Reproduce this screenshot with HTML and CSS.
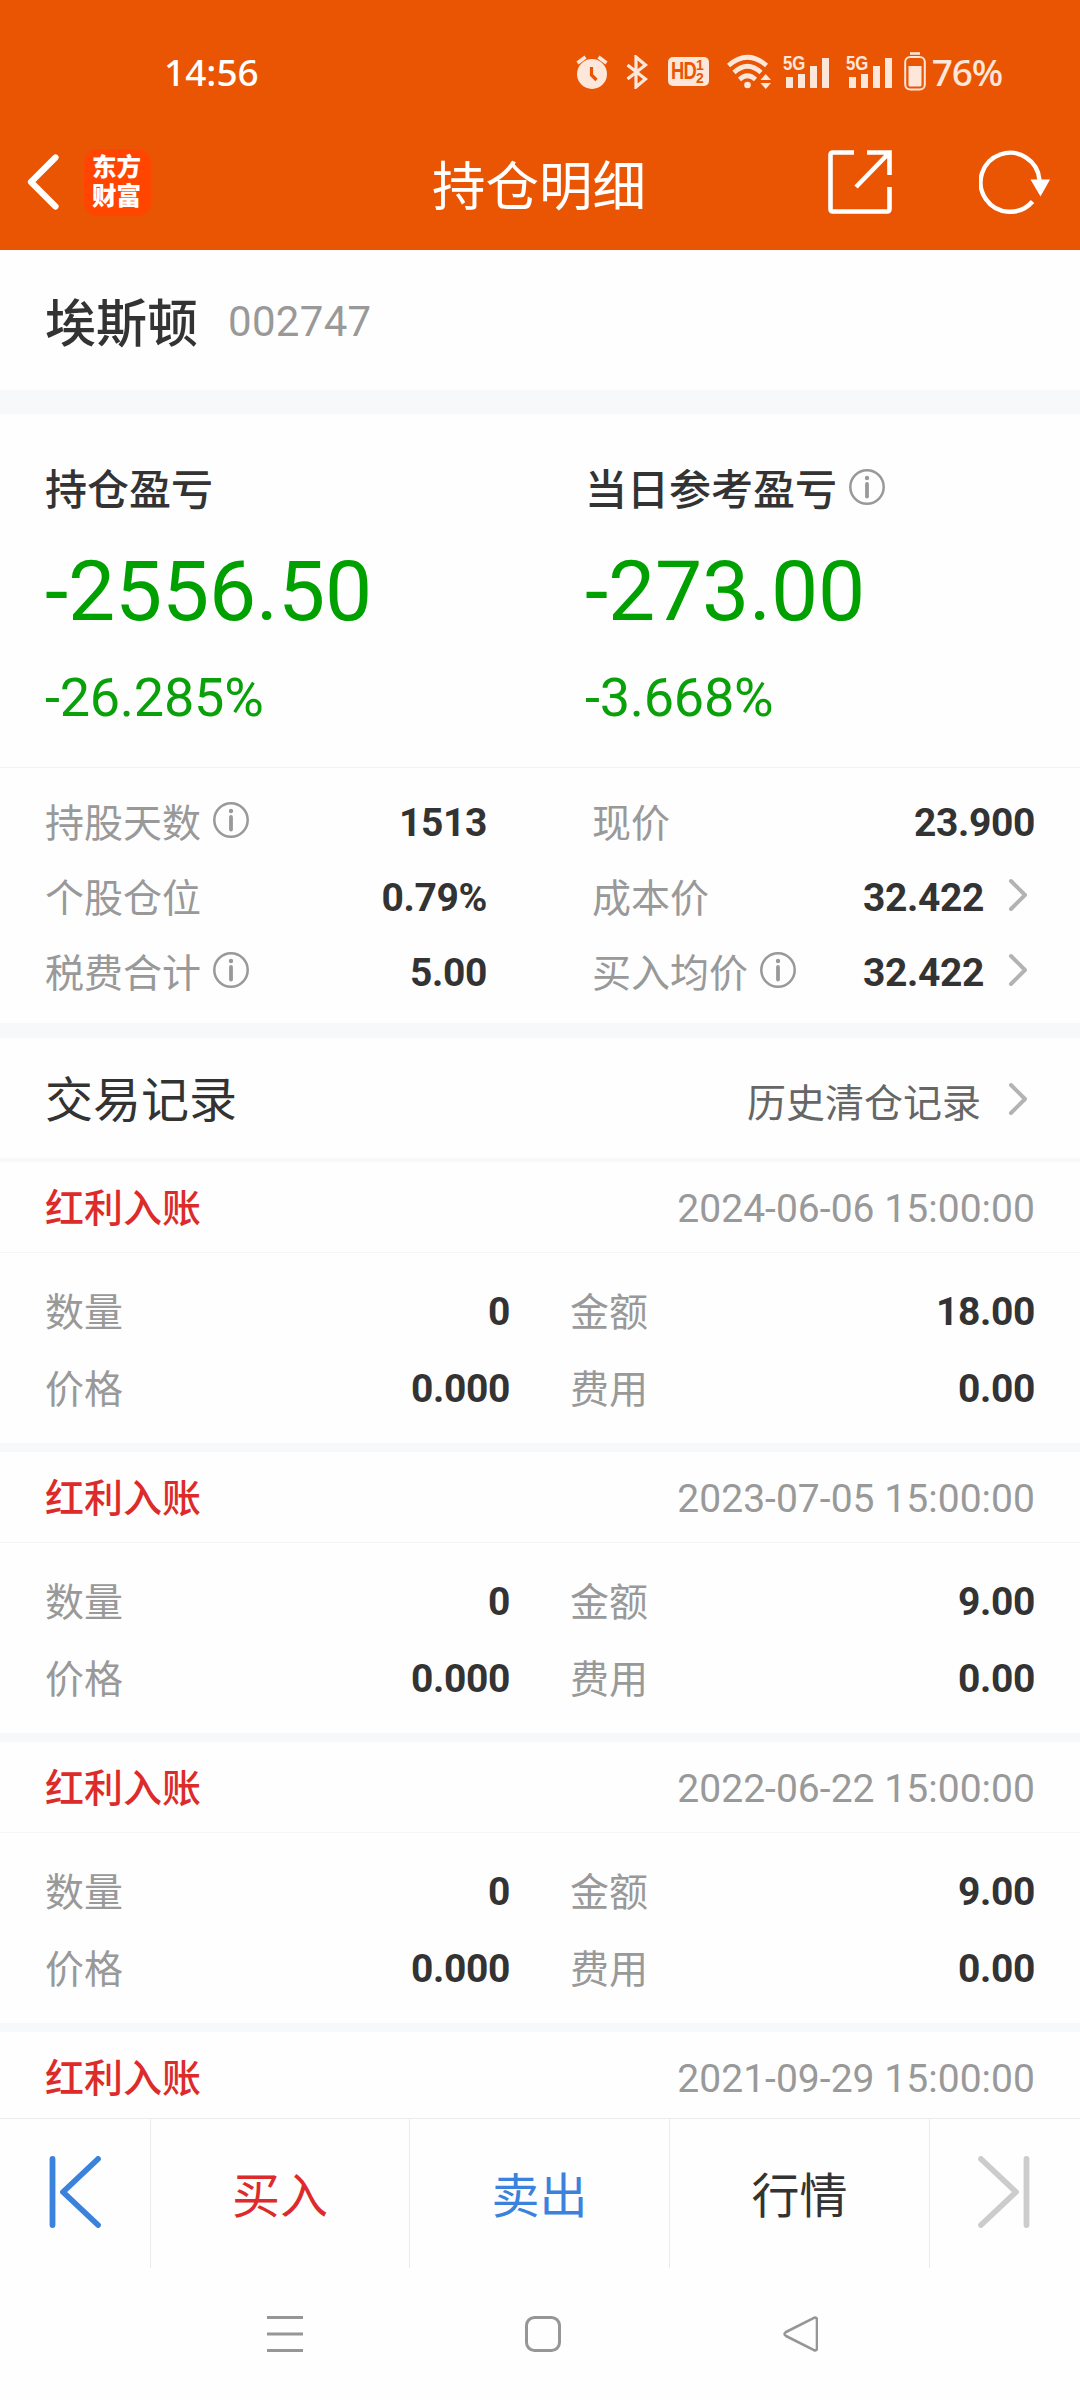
FILE: index.html
```
<!DOCTYPE html>
<html lang="zh-CN">
<head>
<meta charset="utf-8">
<title>持仓明细</title>
<link rel="stylesheet" href="styles.css">
</head>
<body>
<svg class="defs" aria-hidden="true">
  <symbol id="info" viewBox="0 0 36 36"><circle cx="18" cy="18" r="16.7" fill="none" stroke="#999" stroke-width="2.5"/><circle cx="18" cy="9" r="2.2" fill="#999"/><path d="M18 15v12.5" stroke="#999" stroke-width="3.8" stroke-linecap="round"/></symbol>
  <symbol id="chev" viewBox="0 0 20 34"><path d="M3 3l14 14L3 31" fill="none" stroke="#b3b3b3" stroke-width="4" stroke-linecap="round" stroke-linejoin="round"/></symbol>
  <symbol id="bars" viewBox="0 0 46 34"><path d="M3 22h7v11H3zM15 19h7v14h-7zM27 11h7v22h-7zM39 3h7v30h-7z" fill="#fde6da"/></symbol>
</svg>
<header class="top">
  <div class="status">
    <span class="clock">14:56</span>
    <div class="tray">
      <svg class="alarm" viewBox="0 0 32 34"><circle cx="16" cy="19" r="15" fill="#fde6da"/><path d="M1.500 8l8-6M30.500 8l-8-6" stroke="#fde6da" stroke-width="3.500"/><path d="M15.500 12v8l5 5" fill="none" stroke="#ea5504" stroke-width="3.200"/></svg>
      <svg class="bt" viewBox="0 0 22 34"><path d="M1.500 10l18 14-9.500 8V2l9.500 8-18 14" fill="none" stroke="#fde6da" stroke-width="3.200"/></svg>
      <span class="hd"><b>HD</b><i><u>1</u><u>2</u></i></span>
      <svg class="wifi" viewBox="0 0 44 35"><g fill="none" stroke="#fde6da" stroke-width="4.600"><path d="M1.500 11.500Q20.500-5 39.500 11.500"/><path d="M7 18.500Q20.500 6 34 18.500"/><path d="M12.500 25.500Q20.500 18 28.500 25.500"/></g><circle cx="20.500" cy="31" r="3.300" fill="#fde6da"/><path d="M33.500 26l5.250-6 5.250 6zM33.500 29l5.250 6 5.250-6z" fill="#fde6da"/></svg>
      <span class="sig"><svg><use href="#bars"/></svg><b>5G</b></span>
      <span class="sig"><svg><use href="#bars"/></svg><b>5G</b></span>
      <svg class="batt" viewBox="0 0 22 39"><path d="M6 1.500h10" stroke="#fde6da" stroke-width="2.600"/><rect x="1.200" y="5" width="19.600" height="32.500" rx="5" fill="none" stroke="#fde6da" stroke-width="2"/><path d="M4.500 14h13v19q0 1.500-1.500 1.500H6q-1.500 0-1.500-1.500z" fill="#fde6da"/></svg>
      <span class="pct">76%</span>
    </div>
  </div>
  <div class="nav">
    <div class="side">
      <svg class="back" viewBox="0 0 32 56"><path d="M28.500 3.500L4 28l24.500 24.500" fill="none" stroke="#fff" stroke-width="6.200" stroke-linecap="round" stroke-linejoin="round"/></svg>
      <span class="logo"><span>东方</span><span>财富</span></span>
    </div>
    <h1>持仓明细</h1>
    <div class="side tools">
      <svg class="share" viewBox="0 0 64 64"><path d="M26 2.500H5q-2.500 0-2.500 2.500v54q0 2.500 2.500 2.500h54q2.500 0 2.500-2.500V37M39 2.500h22.500V25M61.500 2.500L28 37" fill="none" stroke="#fff" stroke-width="4.600"/></svg>
      <svg class="reload" viewBox="0 0 72 64"><path d="M60.500 30a29.500 29.500 0 1 0-7 21.500" fill="none" stroke="#fff" stroke-width="4.400"/><path d="M51.500 29.500h19.500L61.500 46.500z" fill="#fff"/></svg>
    </div>
  </div>
</header>
<main>
  <section class="stock"><h2>埃斯顿</h2><span>002747</span></section>
  <section class="profit">
    <div><h3>持仓盈亏</h3><p class="big">-2556.50</p><p class="rate">-26.285%</p></div>
    <div><h3>当日参考盈亏<svg class="info"><use href="#info"/></svg></h3><p class="big">-273.00</p><p class="rate">-3.668%</p></div>
  </section>
  <section class="facts">
    <dl>
      <div><dt>持股天数<svg class="info"><use href="#info"/></svg></dt><dd>1513</dd></div>
      <div><dt>个股仓位</dt><dd>0.79%</dd></div>
      <div><dt>税费合计<svg class="info"><use href="#info"/></svg></dt><dd>5.00</dd></div>
    </dl>
    <dl>
      <div><dt>现价</dt><dd>23.900</dd></div>
      <div><dt>成本价</dt><dd>32.422<svg class="chev"><use href="#chev"/></svg></dd></div>
      <div><dt>买入均价<svg class="info"><use href="#info"/></svg></dt><dd>32.422<svg class="chev"><use href="#chev"/></svg></dd></div>
    </dl>
  </section>
  <section class="heading"><h2>交易记录</h2><a>历史清仓记录<svg class="chev"><use href="#chev"/></svg></a></section>
  <article>
    <header><h4>红利入账</h4><time>2024-06-06 15:00:00</time></header>
    <dl><dt>数量</dt><dd>0</dd><dt>金额</dt><dd>18.00</dd><dt>价格</dt><dd>0.000</dd><dt>费用</dt><dd>0.00</dd></dl>
  </article>
  <article>
    <header><h4>红利入账</h4><time>2023-07-05 15:00:00</time></header>
    <dl><dt>数量</dt><dd>0</dd><dt>金额</dt><dd>9.00</dd><dt>价格</dt><dd>0.000</dd><dt>费用</dt><dd>0.00</dd></dl>
  </article>
  <article>
    <header><h4>红利入账</h4><time>2022-06-22 15:00:00</time></header>
    <dl><dt>数量</dt><dd>0</dd><dt>金额</dt><dd>9.00</dd><dt>价格</dt><dd>0.000</dd><dt>费用</dt><dd>0.00</dd></dl>
  </article>
  <article>
    <header><h4>红利入账</h4><time>2021-09-29 15:00:00</time></header>
  </article>
</main>
<footer class="actions">
  <a><svg viewBox="0 0 54 72"><path d="M5.500 3v66M51 3L16 36l35 33" fill="none" stroke="#3b82dd" stroke-width="5.800" stroke-linecap="round" stroke-linejoin="round"/></svg></a>
  <a class="buy">买入</a>
  <a class="sell">卖出</a>
  <a>行情</a>
  <a><svg viewBox="0 0 54 72"><path d="M48.500 3v66M3 3l35 33L3 69" fill="none" stroke="#ccc" stroke-width="5.800" stroke-linecap="round" stroke-linejoin="round"/></svg></a>
</footer>
<nav class="system">
  <svg viewBox="0 0 36 36"><path d="M0 1.500h36M0 18h36M0 34.500h36" stroke="#969696" stroke-width="3"/></svg>
  <svg viewBox="0 0 36 36"><rect x="1.500" y="1.500" width="33" height="33" rx="8" fill="none" stroke="#969696" stroke-width="3"/></svg>
  <svg viewBox="0 0 36 36"><path d="M32 1.800L4 16q-3 2 0 4l28 14.200q3 .8 3-2.200V4q0-3-3-2.200z" fill="none" stroke="#969696" stroke-width="2.600" stroke-linejoin="round"/></svg>
</nav>
</body>
</html>
```
FILE: styles.css
```
* { box-sizing: border-box; margin: 0; padding: 0; }
body {
  width: 1080px; height: 2400px; overflow: hidden;
  display: flex; flex-direction: column;
  background: #fefefe; color: #333;
  font-family: Roboto, "Noto Sans CJK SC", sans-serif;
}
svg { display: block; flex: none; }
.defs { position: absolute; width: 0; height: 0; }
h1, h2, h3, h4 { font-weight: 500; }

.top { flex: none; height: 250px; background: #ea5504; color: #fff; }
.status { height: 118px; padding: 25px 78px 0 164px; display: flex; justify-content: space-between; align-items: center; font-family: "Noto Sans", sans-serif; }
.clock { font-size: 37px; font-weight: 500; }
.tray { display: flex; align-items: center; color: #fde6da; }
.alarm { width: 32px; height: 34px; }
.bt { width: 22px; height: 34px; margin-left: 18px; }
.hd { width: 41px; height: 29px; margin-left: 20px; padding-right: 2px; border-radius: 5px; background: #fde6da; color: #ea5504; display: flex; align-items: center; justify-content: center; font-family: "Liberation Sans", sans-serif; }
.hd b { font-size: 23px; letter-spacing: -1px; transform: scaleX(.8); margin: 0 -3px 0 -3px; }
.hd i { display: flex; flex-direction: column; font-style: normal; font-weight: 700; }
.hd u { font-size: 14px; line-height: 13px; text-decoration: none; }
.wifi { width: 44px; height: 35px; margin-left: 18px; }
.sig { position: relative; width: 46px; height: 34px; margin-left: 12px; }
.sig + .sig { margin-left: 17px; }
.sig svg { width: 46px; height: 34px; }
.sig b { position: absolute; left: 0; top: -1px; font: 700 21px/17px "Liberation Sans", sans-serif; transform: scaleX(.8); transform-origin: left; }
.batt { width: 22px; height: 39px; margin-left: 12px; }
.pct { font-size: 37px; font-weight: 500; margin-left: 6px; letter-spacing: -1.2px; }

.nav { height: 132px; padding: 0 29px 4px 27px; display: flex; align-items: center; justify-content: space-between; }
.side { width: 223px; display: flex; align-items: center; }
.back { width: 32px; height: 56px; }
.logo { width: 67px; height: 67px; margin-left: 25px; padding: 0 2px 0 0; border-radius: 14px; background: #ff4500; display: flex; flex-direction: column; align-items: center; justify-content: center; font-size: 24.500px; font-weight: 900; line-height: 29px; }
.nav h1 { font-size: 53.500px; font-weight: 400; }
.tools { justify-content: space-between; }
.share { width: 64px; height: 64px; }
.reload { width: 72px; height: 64px; }

main { flex: none; height: 1868px; overflow: hidden; }
.stock { height: 164px; padding: 0 45px; border-bottom: 24px solid #f7f8fa; display: flex; align-items: center; gap: 30px; }
.stock h2 { font-size: 51px; }
.stock span { font-size: 42px; letter-spacing: .3px; padding-top: 2px; color: #999; }
.profit { height: 354px; padding: 51px 45px 0; border-bottom: 1px solid #f2f2f2; display: grid; grid-template-columns: 540px 1fr; }
.profit h3 { height: 52px; font-size: 42px; line-height: 52px; display: flex; align-items: center; }
.info { width: 36px; height: 36px; margin: -8px 0 0 12px; }
.big { font-size: 84px; line-height: 100px; margin-top: 25px; letter-spacing: -.2px; color: #00a000; }
.rate { font-size: 54px; line-height: 64px; margin-top: 24px; letter-spacing: -.25px; color: #0aa00a; }
.facts { height: 270px; padding: 17px 45px 0; border-bottom: 15px solid #f7f8fa; display: grid; grid-template-columns: 442px 443px; justify-content: space-between; }
.facts dl > div { height: 75px; display: flex; align-items: center; justify-content: space-between; }
dt { font-size: 39px; color: #999; display: flex; align-items: center; padding-bottom: 6px; }
dt .info { margin-top: 1px; }
dd { font-size: 39px; font-weight: 700; letter-spacing: -.35px; display: flex; align-items: center; }
.chev { width: 20px; height: 34px; margin: -5px 7px 0 24px; }
.heading { height: 124px; padding: 0 45px; border-bottom: 4px solid #f8f8f8; display: flex; align-items: center; justify-content: space-between; }
.heading h2 { font-size: 48px; font-weight: 400; padding-bottom: 4px; }
.heading a { display: flex; align-items: center; padding-top: 3px; font-size: 39px; color: #666; }
.heading .chev { margin: -1px 7px 0 27px; }
article { height: 290px; border-bottom: 9px solid #f7f8fa; }
article header { height: 91px; padding: 0 45px; border-bottom: 1px solid #f5f5f5; display: flex; align-items: center; justify-content: space-between; }
article h4 { font-size: 39px; padding-bottom: 4px; color: #dd2b2b; }
time { font-size: 39px; padding-top: 4px; letter-spacing: .04px; color: #999; }
article dl { padding: 20px 45px 0; display: grid; grid-template-columns: 100px 365px 160px 365px; grid-auto-rows: 77px; align-items: center; }
article dl dd { justify-content: flex-end; }
article dl dt:nth-of-type(even) { padding-left: 60px; }

.actions { flex: none; height: 150px; border-top: 1px solid #ebebeb; display: grid; grid-template-columns: 150px 259px 260px 260px 151px; }
.actions a { display: flex; align-items: center; justify-content: center; padding-bottom: 3px; font-size: 48px; }
.actions a:first-child { padding-right: 2px; }
.actions a + a { border-left: 1px solid #ebebeb; }
.actions svg { width: 54px; height: 72px; }
.buy { color: #dd2b2b; }
.sell { color: #3b82dd; }
.system { flex: 1; display: flex; justify-content: space-between; padding: 48px 262px 0 267px; }
.system svg { width: 36px; height: 36px; }
```
